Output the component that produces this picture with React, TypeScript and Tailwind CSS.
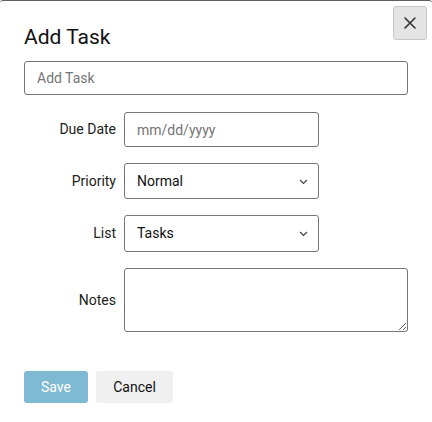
import React from "react";

export default function App() {
  return (
    <div className="relative w-[432px] h-[422px] bg-white overflow-hidden font-['Roboto',sans-serif] text-[#212121]">
      <div className="absolute inset-x-0 top-0 h-[422px] border-t border-[#5f5f5f] rounded-t-[3px]" />
      <button className="absolute top-[6px] right-[5px] w-[34px] h-[34px] flex items-center justify-center bg-[#e4e4e4] border border-[#c8c8c8] rounded-[3px]">
        <svg width="14" height="14" viewBox="0 0 14 14" fill="none" stroke="#333" strokeWidth="1.6" strokeLinecap="round">
          <path d="M2 2 L12 12 M12 2 L2 12" />
        </svg>
      </button>
      <div className="pl-6 pr-6 pt-[23px]">
        <h2 className="text-[21px] leading-[28px] text-[#111] font-normal">Add Task</h2>
        <input
          className="mt-[10px] block w-[384px] h-[34px] px-3 text-[14px] border border-[#767676] rounded-[3px] placeholder-[#757575] outline-none"
          placeholder="Add Task"
        />
        <div className="mt-[17px] grid grid-cols-[92px_1fr] gap-x-2 items-center">
          <label className="text-right text-[14px]">Due Date</label>
          <input
            className="w-[195px] h-[35px] px-3 text-[14px] border border-[#767676] rounded-[3px] placeholder-[#757575] outline-none"
            placeholder="mm/dd/yyyy"
          />
          <label className="mt-[16px] text-right text-[14px]">Priority</label>
          <div className="mt-[16px] relative w-[195px] h-[36px] border border-[#767676] rounded-[3px] flex items-center px-3 text-[14px] text-[#111]">
            <span>Normal</span>
            <svg className="absolute right-[10px] top-[15px]" width="9" height="6" viewBox="0 0 9 6" fill="none" stroke="#444" strokeWidth="1.2">
              <path d="M1 1 L4.5 4.5 L8 1" />
            </svg>
          </div>
          <label className="mt-[16px] text-right text-[14px]">List</label>
          <div className="mt-[16px] relative w-[195px] h-[37px] border border-[#767676] rounded-[3px] flex items-center px-3 text-[14px] text-[#111]">
            <span>Tasks</span>
            <svg className="absolute right-[10px] top-[15px]" width="9" height="6" viewBox="0 0 9 6" fill="none" stroke="#444" strokeWidth="1.2">
              <path d="M1 1 L4.5 4.5 L8 1" />
            </svg>
          </div>
          <label className="mt-[16px] text-right text-[14px]">Notes</label>
          <textarea className="mt-[16px] block w-[284px] h-[64px] border border-[#767676] rounded-[3px] outline-none text-[14px] px-2 py-1" />
        </div>
        <div className="mt-[39px] flex gap-2">
          <button className="w-[64px] h-[32px] bg-[#7fbad3] text-white text-[14px] rounded-[3px]">Save</button>
          <button className="w-[77px] h-[32px] bg-[#f0f0f0] text-[#111] text-[14px] rounded-[3px]">Cancel</button>
        </div>
      </div>
    </div>
  );
}
